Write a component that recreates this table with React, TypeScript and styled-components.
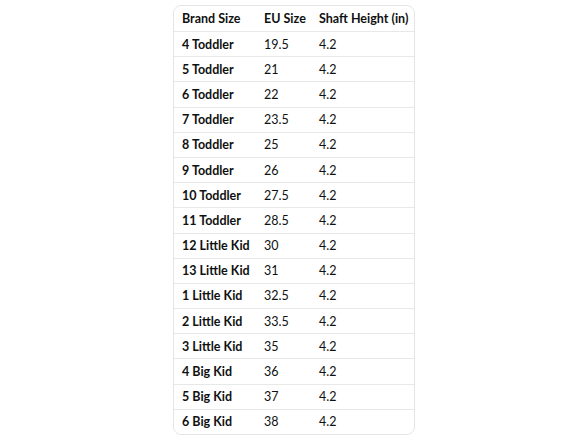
import { createGlobalStyle, styled } from "styled-components";

const GlobalStyle = createGlobalStyle`
  html, body {
    margin: 0;
    padding: 0;
    background: #ffffff;
  }
  body {
    font-family: Lato, "Liberation Sans", sans-serif;
    color: #0f1111;
  }
`;

const rows: [string, string, string][] = [
  ["4 Toddler", "19.5", "4.2"],
  ["5 Toddler", "21", "4.2"],
  ["6 Toddler", "22", "4.2"],
  ["7 Toddler", "23.5", "4.2"],
  ["8 Toddler", "25", "4.2"],
  ["9 Toddler", "26", "4.2"],
  ["10 Toddler", "27.5", "4.2"],
  ["11 Toddler", "28.5", "4.2"],
  ["12 Little Kid", "30", "4.2"],
  ["13 Little Kid", "31", "4.2"],
  ["1 Little Kid", "32.5", "4.2"],
  ["2 Little Kid", "33.5", "4.2"],
  ["3 Little Kid", "35", "4.2"],
  ["4 Big Kid", "36", "4.2"],
  ["5 Big Kid", "37", "4.2"],
  ["6 Big Kid", "38", "4.2"],
];

const App = () => {
  return (
    <Page>
      <GlobalStyle />
      <Card>
        <Table>
          <colgroup>
            <col style={{ width: 82 }} />
            <col style={{ width: 55 }} />
            <col />
          </colgroup>
          <thead>
            <tr>
              <Head>Brand Size</Head>
              <Head>EU Size</Head>
              <Head>Shaft Height (in)</Head>
            </tr>
          </thead>
          <tbody>
            {rows.map(([brand, eu, shaft]) => (
              <tr key={brand}>
                <Cell $bold>{brand}</Cell>
                <Cell>{eu}</Cell>
                <Cell>{shaft}</Cell>
              </tr>
            ))}
          </tbody>
        </Table>
      </Card>
    </Page>
  );
};

export default App;

const Page = styled.div`
  display: flex;
  justify-content: center;
  padding-top: 5px;
`;

const Card = styled.div`
  width: 242px;
  border: 1px solid #e3e6e6;
  border-radius: 8px;
  overflow: hidden;
  box-sizing: border-box;
`;

const Table = styled.table`
  width: 100%;
  border-collapse: collapse;
  table-layout: fixed;
`;

const Head = styled.th`
  height: 25px;
  padding: 0 0 0 8px;
  text-align: left;
  font-size: 12.5px;
  font-weight: 700;
  white-space: nowrap;
`;

const Cell = styled.td<{ $bold?: boolean }>`
  height: 24.2px;
  padding: 0 0 0 8px;
  border-top: 1px solid #e7e9e9;
  font-size: 12.5px;
  font-weight: ${(p) => (p.$bold ? 700 : 400)};
  white-space: nowrap;
`;
